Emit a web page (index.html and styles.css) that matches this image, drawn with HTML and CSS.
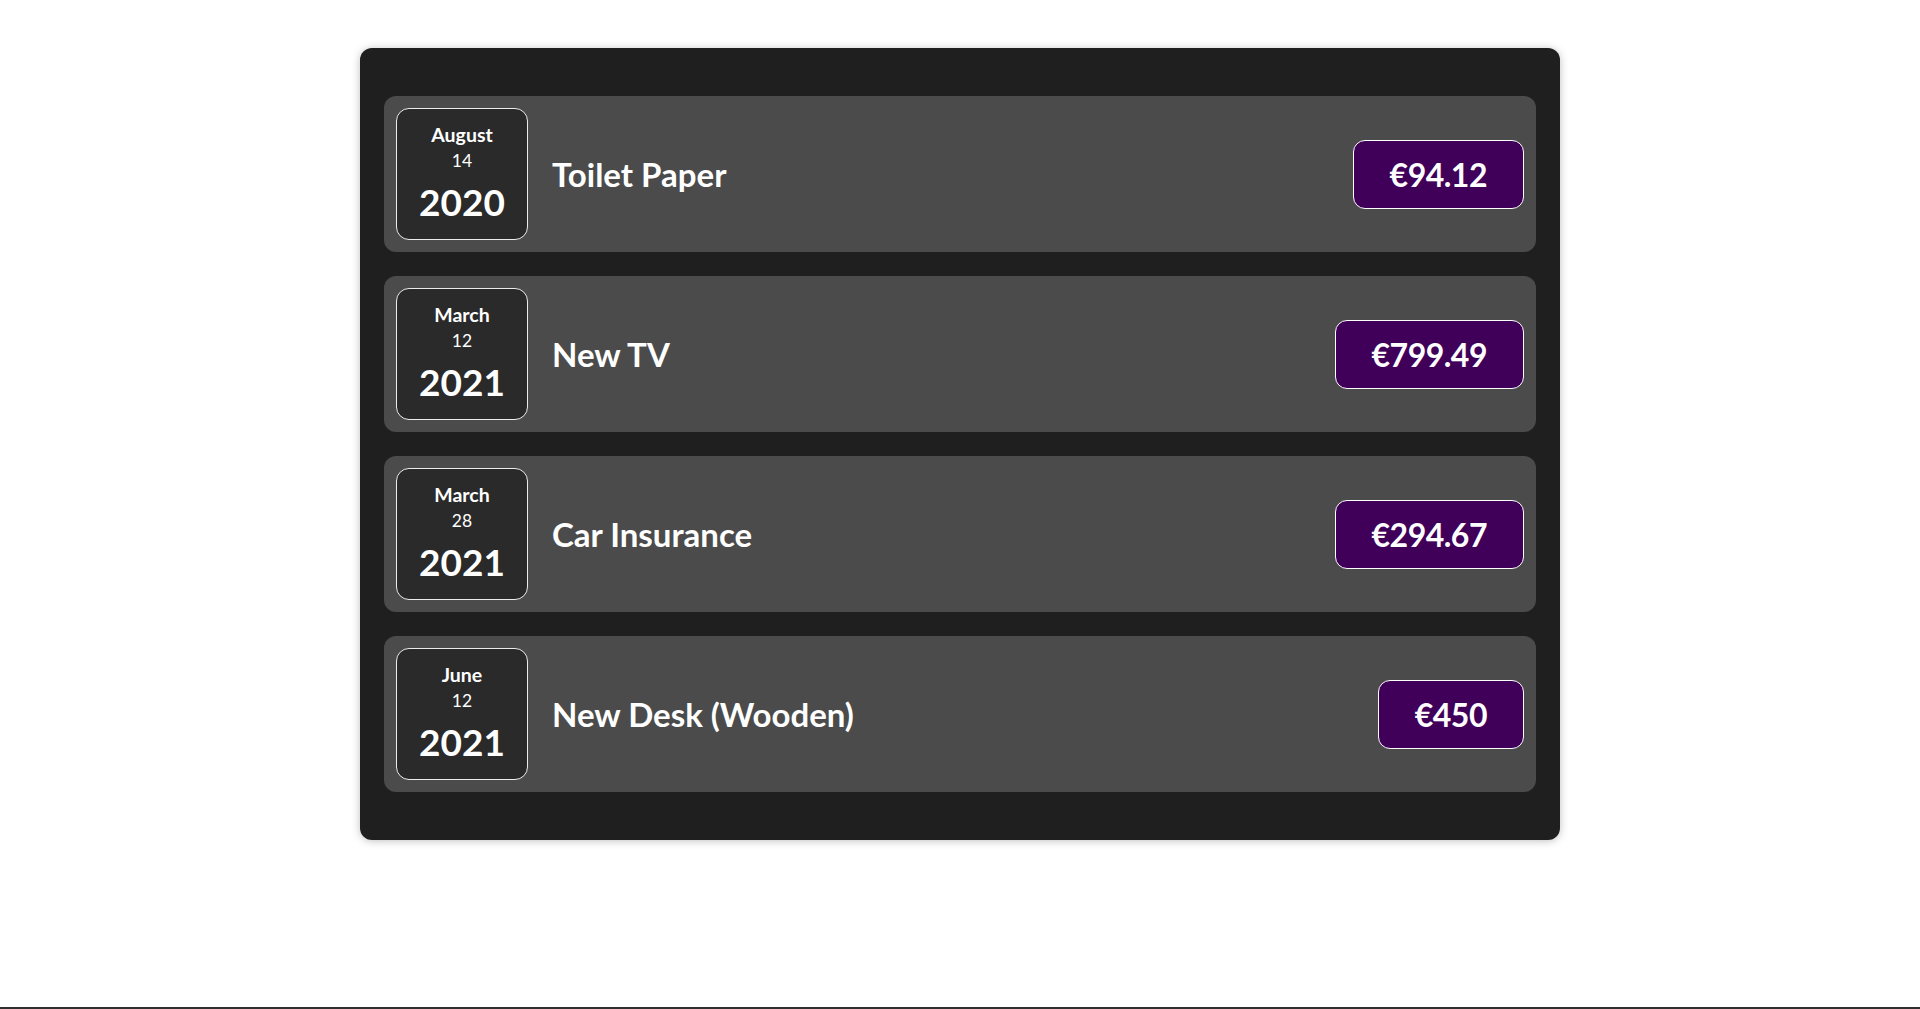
FILE: index.html
```html
<!DOCTYPE html>
<html lang="en">
<head>
<meta charset="utf-8">
<title>Expenses</title>
<link rel="stylesheet" href="styles.css">
</head>
<body>
<div class="expenses">
  <div class="expense-item">
    <div class="expense-date">
      <div class="expense-date__month">August</div>
      <div class="expense-date__day">14</div>
      <div class="expense-date__year">2020</div>
    </div>
    <div class="expense-item__description">
      <h2>Toilet Paper</h2>
      <div class="expense-item__price">€94.12</div>
    </div>
  </div>
  <div class="expense-item">
    <div class="expense-date">
      <div class="expense-date__month">March</div>
      <div class="expense-date__day">12</div>
      <div class="expense-date__year">2021</div>
    </div>
    <div class="expense-item__description">
      <h2>New TV</h2>
      <div class="expense-item__price">€799.49</div>
    </div>
  </div>
  <div class="expense-item">
    <div class="expense-date">
      <div class="expense-date__month">March</div>
      <div class="expense-date__day">28</div>
      <div class="expense-date__year">2021</div>
    </div>
    <div class="expense-item__description">
      <h2>Car Insurance</h2>
      <div class="expense-item__price">€294.67</div>
    </div>
  </div>
  <div class="expense-item">
    <div class="expense-date">
      <div class="expense-date__month">June</div>
      <div class="expense-date__day">12</div>
      <div class="expense-date__year">2021</div>
    </div>
    <div class="expense-item__description">
      <h2>New Desk (Wooden)</h2>
      <div class="expense-item__price">€450</div>
    </div>
  </div>
</div>
</body>
</html>
```

FILE: styles.css
```css
* {
  box-sizing: border-box;
}

html {
  font-family: Lato, "Noto Sans", sans-serif;
  font-size: 24px;
}

body {
  margin: 0;
  min-height: 100vh;
  background: #ffffff;
  border-bottom: 2px solid #2f2f2f;
  padding-top: 48px;
}

.expenses {
  width: 1200px;
  margin: 0 auto;
  padding: 24px;
  background-color: #1f1f1f;
  border-radius: 12px;
  box-shadow: 0 1px 8px rgba(0, 0, 0, 0.25);
}

.expense-item {
  display: flex;
  align-items: center;
  padding: 12px;
  margin: 24px 0;
  height: 156px;
  background-color: #4b4b4b;
  border-radius: 12px;
}

.expense-date {
  flex: 0 0 132px;
  width: 132px;
  height: 132px;
  display: flex;
  flex-direction: column;
  align-items: center;
  justify-content: center;
  border: 1px solid #ececec;
  background-color: #2a2a2a;
  color: #ffffff;
  border-radius: 13px;
}

.expense-date__month {
  font-size: 19.5px;
  font-weight: 700;
  line-height: 25px;
}

.expense-date__day {
  font-size: 17.5px;
  line-height: 27px;
}

.expense-date__year {
  font-size: 37px;
  font-weight: 700;
  line-height: 50px;
  padding-top: 3px;
}

.expense-item__description {
  flex: 1;
  display: flex;
  align-items: center;
  gap: 24px;
}

.expense-item__description h2 {
  flex: 1;
  margin: 0 24px;
  color: #ffffff;
  font-size: 33px;
  font-weight: 700;
  line-height: 42px;
}

.expense-item__price {
  font-size: 32px;
  letter-spacing: -0.5px;
  font-weight: 700;
  line-height: 45px;
  color: #ffffff;
  background-color: #40005a;
  border: 1px solid #ffffff;
  padding: 11px 36px;
  border-radius: 12px;
}
```
